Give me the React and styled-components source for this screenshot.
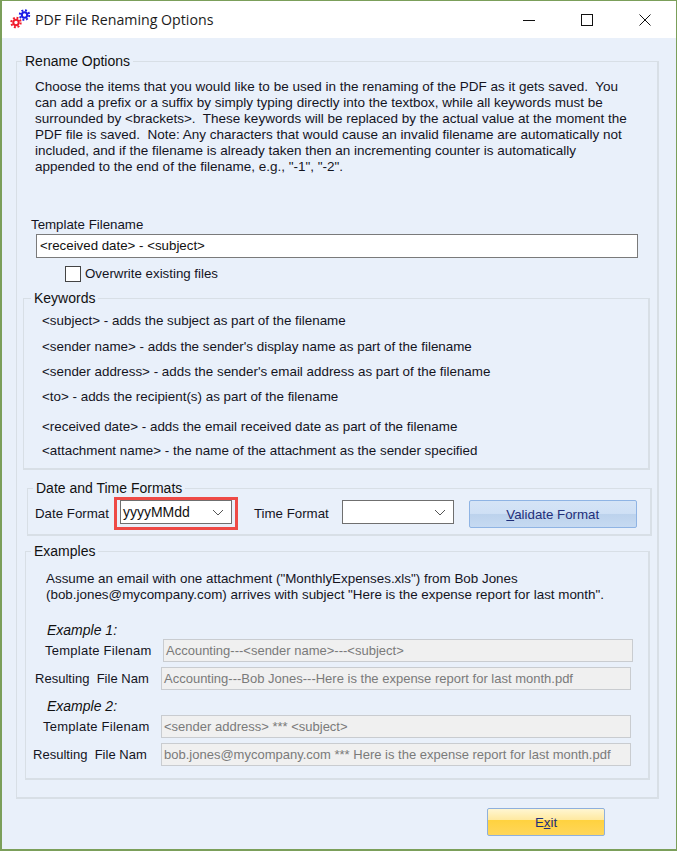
import React from 'react';
import styled, { createGlobalStyle } from 'styled-components';

const Global = createGlobalStyle`
  html, body { margin: 0; padding: 0; background: #e9f0fa; }
  * { box-sizing: border-box; }
`;
const Win = styled.div`
  width: 677px; height: 851px; display: flex; flex-direction: column;
  border: 1px solid #7b9f5a; border-width: 1px 1px 2px 2px; background: #e9f0fa; overflow: hidden;
  font: 13px/16px "Liberation Sans", Arial, sans-serif; color: #111;
`;
const TitleBar = styled.div`
  height: 37px; flex: none; background: #fff; display: flex; align-items: center; padding: 0 2px 0 8px;
`;
const Title = styled.div`
  font: 14.2px "Open Sans", "Noto Sans", sans-serif; color: #1c1c1c; margin-left: 4px; flex: 1; white-space: nowrap;
`;
const WinBtn = styled.button`
  width: 58px; height: 37px; border: 0; background: none; padding: 0; display: flex; align-items: center; justify-content: center;
`;
const Body = styled.div`
  flex: 1; padding: 14px 17px 0 14px; display: flex; flex-direction: column; align-items: flex-start;
`;
const Group = styled.fieldset`
  margin: ${p => p.$m || 0}; padding: 0; width: ${p => p.$w}px; height: ${p => p.$h}px; min-width: 0;
  border: 2px solid #d8dfe6; border-width: 1px 2px 2px 1px; display: block;
`;
const Legend = styled.legend`
  margin-left: ${p => p.$x}px; padding: 0 3px; font-size: 14px; line-height: 18px; color: #111;
`;
const Para = styled.p`
  margin: ${p => p.$m}; font-size: ${p => p.$size}px; line-height: 16px; white-space: pre; color: #14141e;
`;
const Label = styled.div`
  font-size: 13.3px; line-height: 16px; white-space: pre; margin: ${p => p.$m || 0}; color: #14141e;
`;
const TextBox = styled.div`
  margin-left: 19px; width: 602px; height: 24px; background: #fff; border: 1px solid #7a7a7a;
  font-size: 13.3px; line-height: 22px; padding-left: 3px; white-space: pre;
`;
const CheckRow = styled.div`
  display: flex; align-items: center; gap: 4px; margin: 7px 0 0 48px; height: 17px;
`;
const Check = styled.span`
  width: 16px; height: 16px; background: #fff; border: 1px solid #444; display: block;
`;
const Keywords = styled.div`
  display: grid; padding: 0; margin-left: 18px; margin-top: 6px;
  grid-template-rows: 26px 25px 25px 30px 24px 16px;
`;
const KeywordRow = styled.div`
  font-size: 13.4px; line-height: 16px; white-space: pre; color: #14141e;
`;
const FormatRow = styled.div`
  display: flex; align-items: flex-start; margin: 0 0 0 7px; padding-top: 3px;
`;
const HighlightBox = styled.div`
  border: 3px solid #ee4a46; padding: 0 3px; width: 124px; height: 33px; margin: -3px 16px 0 5px; display: flex; flex: none;
`;
const Select = styled.div`
  width: 112px; height: 24px; background: #fff; border: 1px solid #6f6f6f; display: flex; align-items: center;
  justify-content: space-between; padding: 0 7px 0 2px; font-size: 14px; flex: none; margin: ${p => p.$m || 0};
`;
const GelButton = styled.button`
  font: 13.3px/16px "Liberation Sans", Arial, sans-serif; color: #1f2f7a; border-radius: 2px; padding: 1px 0 0;
  width: ${p => p.$w}px; height: ${p => p.$h}px; flex: none;
  border: 1px solid ${p => p.$gold ? '#8fb0dc' : '#8fb4e4'};
  background: ${p => p.$gold
    ? 'linear-gradient(#fff6d2 0%, #ffe9a0 42%, #ffd23f 43%, #ffd65a 100%)'
    : 'linear-gradient(#d5e4f6 0%, #cfe0f5 48%, #bcd2ec 50%, #c6daf2 100%)'};
  u { text-decoration-thickness: 1px; }
`;
const ExampleHead = styled.div`
  font-size: 14px; line-height: 16px; font-style: italic; margin: ${p => p.$m}; color: #111;
`;
const Row = styled.div`
  display: flex; align-items: center; height: 23px; margin: ${p => p.$m};
`;
const RowLabel = styled.div`
  font-size: 13px; white-space: pre; letter-spacing: ${p => p.$tight ? '.02px' : '.25px'}; width: ${p => p.$w}px; flex: none; color: #14141e;
`;
const ReadOnly = styled.div`
  width: 470px; height: 23px; background: #f0f0f0; border: 1px solid #c9ccd0; color: #7a7a7a;
  font-size: 13px; line-height: 21px; padding-left: 2px; white-space: pre; overflow: hidden;
`;
const Footer = styled.div`
  align-self: flex-start; margin: 9px 0 0 471px;
`;

const Gear = ({ cx, cy, color }) => (
  <g fill="none" stroke={color}>
    <circle cx={cx} cy={cy} r="4.7" strokeWidth="2" strokeDasharray="1.9 1.79" />
    <circle cx={cx} cy={cy} r="2.7" strokeWidth="2" />
  </g>
);
const Gears = () => (
  <svg width="21" height="21" viewBox="0 0 21 21">
    <Gear cx={14.5} cy={6} color="#1c1ce6" />
    <Gear cx={6} cy={13.5} color="#f01c2c" />
  </svg>
);
const Chevron = () => (
  <svg width="12" height="7" viewBox="0 0 12 7"><path d="M1 1l5 5 5-5" fill="none" stroke="#555" strokeWidth="1" /></svg>
);

const keywords = [
  '<subject> - adds the subject as part of the filename',
  "<sender name> - adds the sender's display name as part of the filename",
  "<sender address> - adds the sender's email address as part of the filename",
  '<to> - adds the recipient(s) as part of the filename',
  '<received date> - adds the email received date as part of the filename',
  '<attachment name> - the name of the attachment as the sender specified',
];

export default function App() {
  return (
    <Win>
      <Global />
      <TitleBar>
        <Gears />
        <Title>PDF File Renaming Options</Title>
        <WinBtn aria-label="Minimize"><svg width="12" height="12"><path d="M0 6.5h12" stroke="#111" /></svg></WinBtn>
        <WinBtn aria-label="Maximize"><svg width="12" height="12"><rect x=".5" y=".5" width="11" height="11" fill="none" stroke="#111" /></svg></WinBtn>
        <WinBtn aria-label="Close"><svg width="12" height="12"><path d="M.5.5l11 11M11.5.5l-11 11" stroke="#111" /></svg></WinBtn>
      </TitleBar>
      <Body>
        <Group $w={643} $h={747}>
          <Legend $x={5}>Rename Options</Legend>
          <Para $size={13.5} $m="9px 0 0 18px">{`Choose the items that you would like to be used in the renaming of the PDF as it gets saved.  You
can add a prefix or a suffix by simply typing directly into the textbox, while all keywords must be
surrounded by <brackets>.  These keywords will be replaced by the actual value at the moment the
PDF file is saved.  Note: Any characters that would cause an invalid filename are automatically not
included, and if the filename is already taken then an incrementing counter is automatically
appended to the end of the filename, e.g., "-1", "-2".`}</Para>
          <Label $m="42px 0 1px 14px">Template Filename</Label>
          <TextBox>{'<received date> - <subject>'}</TextBox>
          <CheckRow><Check /><Label>Overwrite existing files</Label></CheckRow>
          <Group $w={627} $h={181} $m="7px 0 0 6px">
            <Legend $x={7}>Keywords</Legend>
            <Keywords>
              {keywords.map(k => <KeywordRow key={k}>{k}</KeywordRow>)}
            </Keywords>
          </Group>
          <Group $w={625} $h={57} $m="9px 0 0 10px">
            <Legend $x={5}>Date and Time Formats</Legend>
            <FormatRow>
              <Label $m="6px 0 0 0">Date Format</Label>
              <HighlightBox><Select>yyyyMMdd<Chevron /></Select></HighlightBox>
              <Label $m="6px 13px 0 0">Time Format</Label>
              <Select $m="0 15px 0 0"><span /><Chevron /></Select>
              <GelButton $w={168} $h={28}><u>V</u>alidate Format</GelButton>
            </FormatRow>
          </Group>
          <Group $w={625} $h={238} $m="6px 0 0 8px">
            <Legend $x={5}>Examples</Legend>
            <Para $size={13.4} $m="11px 0 0 20px">{`Assume an email with one attachment ("MonthlyExpenses.xls") from Bob Jones
(bob.jones@mycompany.com) arrives with subject "Here is the expense report for last month".`}</Para>
            <ExampleHead $m="19px 0 0 21px">Example 1:</ExampleHead>
            <Row $m="1px 0 0 19px"><RowLabel $w={118}>Template Filenam</RowLabel><ReadOnly>{'Accounting---<sender name>---<subject>'}</ReadOnly></Row>
            <Row $m="5px 0 0 9px"><RowLabel $w={126} $tight>Resulting  File Nam</RowLabel><ReadOnly>Accounting---Bob Jones---Here is the expense report for last month.pdf</ReadOnly></Row>
            <ExampleHead $m="8px 0 0 21px">Example 2:</ExampleHead>
            <Row $m="1px 0 0 17px"><RowLabel $w={118}>Template Filenam</RowLabel><ReadOnly>{'<sender address> *** <subject>'}</ReadOnly></Row>
            <Row $m="5px 0 0 7px"><RowLabel $w={128} $tight>Resulting  File Nam</RowLabel><ReadOnly>bob.jones@mycompany.com *** Here is the expense report for last month.pdf</ReadOnly></Row>
          </Group>
        </Group>
        <Footer><GelButton $gold $w={118} $h={28}>E<u>x</u>it</GelButton></Footer>
      </Body>
    </Win>
  );
}
